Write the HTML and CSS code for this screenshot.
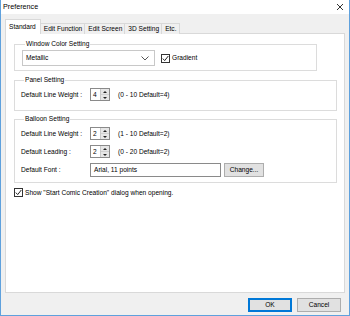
FILE: index.html
```html
<!DOCTYPE html>
<html lang="en">

<head>
    <meta charset="UTF-8">
    <title>Preference</title>
    <link rel="stylesheet" href="styles.css">
</head>

<body>
    <div class="window">
        <div class="titlebar">
            <span class="title">Preference</span>
            <svg class="close" width="8" height="8" viewBox="0 0 8 8">
                <path d="M1 1 L7 7 M7 1 L1 7" stroke="#333" stroke-width="1" fill="none" />
            </svg>
        </div>

        <div class="client">
            <ul class="tabs">
                <li class="tab active">Standard</li>
                <li class="tab">Edit Function</li>
                <li class="tab">Edit Screen</li>
                <li class="tab">3D Setting</li>
                <li class="tab">Etc.</li>
            </ul>

            <div class="page">
                <fieldset class="group group-color">
                    <legend>Window Color Setting</legend>
                    <div class="row">
                        <div class="select">
                            <span>Metallic</span>
                            <svg width="8" height="5" viewBox="0 0 8 5">
                                <path d="M0.5 0.5 L4 4 L7.5 0.5" stroke="#555" stroke-width="1" fill="none" />
                            </svg>
                        </div>
                        <label class="check">
                            <span class="box">
                                <svg width="7" height="7" viewBox="0 0 7 7">
                                    <path d="M0.8 3.6 L2.7 5.6 L6.3 1" stroke="#222" stroke-width="1" fill="none" />
                                </svg>
                            </span>
                            Gradient
                        </label>
                    </div>
                </fieldset>

                <fieldset class="group group-panel">
                    <legend>Panel Setting</legend>
                    <div class="row">
                        <span class="label">Default Line Weight :</span>
                        <div class="spin">
                            <span class="spin-value">4</span>
                            <span class="spin-buttons"><i class="up"></i><i class="down"></i></span>
                        </div>
                        <span class="hint">(0 - 10 Default=4)</span>
                    </div>
                </fieldset>

                <fieldset class="group group-balloon">
                    <legend>Balloon Setting</legend>
                    <div class="row">
                        <span class="label">Default Line Weight :</span>
                        <div class="spin">
                            <span class="spin-value">2</span>
                            <span class="spin-buttons"><i class="up"></i><i class="down"></i></span>
                        </div>
                        <span class="hint">(1 - 10 Default=2)</span>
                    </div>
                    <div class="row">
                        <span class="label">Default Leading :</span>
                        <div class="spin">
                            <span class="spin-value">2</span>
                            <span class="spin-buttons"><i class="up"></i><i class="down"></i></span>
                        </div>
                        <span class="hint">(0 - 20 Default=2)</span>
                    </div>
                    <div class="row">
                        <span class="label">Default Font :</span>
                        <div class="textbox">Arial, 11 points</div>
                        <button class="btn small">Change...</button>
                    </div>
                </fieldset>

                <label class="check startup">
                    <span class="box">
                        <svg width="7" height="7" viewBox="0 0 7 7">
                            <path d="M0.8 3.6 L2.7 5.6 L6.3 1" stroke="#222" stroke-width="1" fill="none" />
                        </svg>
                    </span>
                    Show "Start Comic Creation" dialog when opening.
                </label>
            </div>

            <div class="buttons">
                <button class="btn default">OK</button>
                <button class="btn">Cancel</button>
            </div>
        </div>
    </div>
</body>

</html>
```

FILE: styles.css
```css
body {
    margin: 0;
    font: normal 6.6px/8px "Liberation Sans", Arial, sans-serif;
    color: #000;
    background: #fff;
}

.window {
    width: 350px;
    height: 316px;
    box-sizing: border-box;
    border: 1px solid #5fa1dd;
    border-top: none;
    display: flex;
    flex-direction: column;
}

.titlebar {
    height: 14px;
    flex: none;
    background: #fff;
    display: flex;
    align-items: center;
    justify-content: space-between;
    padding: 0 5px 0 2px;
}

.title {
    font-size: 7.2px;
}

.client {
    flex: 1;
    background: #f0f0f0;
    padding: 5px 4px 0 4px;
    display: flex;
    flex-direction: column;
}

/* tabs */
.tabs {
    list-style-type: none;
    margin: 0 0 -1px 0;
    padding: 0;
    display: flex;
    align-items: flex-end;
    height: 15px;
    position: relative;
    z-index: 1;
}

.tab {
    height: 11px;
    line-height: 10px;
    padding: 0 2px 0 3px;
    border: 1px solid #d9d9d9;
    border-bottom: none;
    border-left: none;
    background: #f0f0f0;
    box-sizing: border-box;
}

.tab.active {
    height: 15px;
    line-height: 14px;
    padding: 0 4px 0 3px;
    background: #fff;
    border-left: 1px solid #d9d9d9;
}

.page {
    height: 260px;
    box-sizing: border-box;
    background: #fff;
    border: 1px solid #d9d9d9;
    padding: 6px 7px 0 8px;
    display: flex;
    flex-direction: column;
}

/* group boxes */
.group {
    margin: 0 0 4px 0;
    padding: 2px 6px 3px 6px;
    border: 1px solid #dcdcdc;
    min-width: 0;
}

.group legend {
    padding: 0 1px;
    margin-left: 3px;
    line-height: 8px;
}

.group-color {
    width: 303px;
    box-sizing: border-box;
    padding: 2px 7px 4px 7px;
}

.group-panel {
    margin-top: 1px;
    padding-top: 4px;
    padding-bottom: 9px;
}

.group-balloon {
    margin-top: 0;
    padding-top: 4px;
    padding-bottom: 5px;
}

.row {
    display: flex;
    align-items: center;
}

.group .row + .row {
    margin-top: 5px;
}

.label {
    width: 69px;
    flex: none;
}

/* combo */
.select {
    width: 133px;
    height: 16px;
    box-sizing: border-box;
    border: 1px solid #c8c8c8;
    background: #fff;
    display: flex;
    align-items: center;
    justify-content: space-between;
    padding: 0 5px 0 3px;
}

.check {
    display: flex;
    align-items: center;
    gap: 2px;
}

.group-color .check {
    margin-left: 6px;
}

.box {
    width: 9px;
    height: 9px;
    box-sizing: border-box;
    border: 1px solid #333;
    background: #fff;
    display: flex;
    align-items: center;
    justify-content: center;
}

/* spin edit */
.spin {
    width: 20px;
    height: 13px;
    box-sizing: border-box;
    border: 1px solid #8a8a8a;
    background: #fff;
    display: flex;
    flex: none;
}

.spin-value {
    flex: 1;
    padding-left: 2px;
    line-height: 11px;
}

.spin-buttons {
    width: 8px;
    display: flex;
    flex-direction: column;
    background: #e6e6e6;
    border-left: 1px solid #c8c8c8;
}

.spin-buttons i {
    flex: 1;
    display: flex;
    align-items: center;
    justify-content: center;
}

.spin-buttons i::after {
    content: "";
    border-left: 2px solid transparent;
    border-right: 2px solid transparent;
}

.spin-buttons .up {
    border-bottom: 1px solid #d0d0d0;
}

.spin-buttons .up::after {
    border-bottom: 2px solid #222;
}

.spin-buttons .down::after {
    border-top: 2px solid #222;
}

.hint {
    margin-left: 8px;
}

.textbox {
    width: 131px;
    height: 14px;
    box-sizing: border-box;
    border: 1px solid #8a8a8a;
    padding-left: 3px;
    line-height: 12px;
}

/* buttons */
.btn {
    font: inherit;
    height: 14px;
    padding: 0;
    border: 1px solid #adadad;
    background: #e1e1e1;
    color: #000;
}

.btn.small {
    width: 40px;
    margin-left: 3px;
}

.buttons {
    display: flex;
    justify-content: flex-end;
    gap: 5px;
    padding: 5px 4px 0 0;
}

.buttons .btn {
    width: 44px;
}

.btn.default {
    border: 1px solid #0078d7;
    box-shadow: inset 0 0 0 1px #0078d7;
}

.startup {
    margin-top: 1px;
}
```
